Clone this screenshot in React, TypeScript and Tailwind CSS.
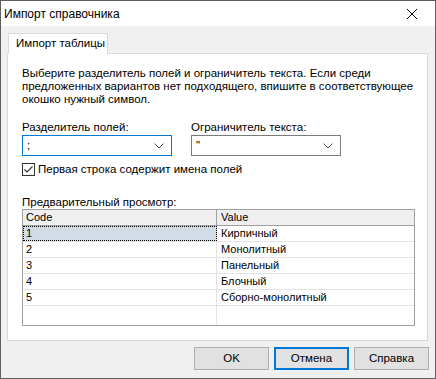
const rows = [
  { code: "1", value: "Кирпичный" },
  { code: "2", value: "Монолитный" },
  { code: "3", value: "Панельный" },
  { code: "4", value: "Блочный" },
  { code: "5", value: "Сборно-монолитный" },
]

function Chevron() {
  return (
    <svg width="10" height="6" viewBox="0 0 10 6" className="shrink-0">
      <path d="M0.5 0.5 L5 5 L9.5 0.5" fill="none" stroke="#4d4d4d" strokeWidth="1" />
    </svg>
  )
}

function Combo({ value, focused }: { value: string; focused?: boolean }) {
  return (
    <div
      className={`w-[150px] h-[21px] bg-white flex items-center justify-between pl-[4px] pr-[7px] border ${
        focused ? "border-[#0078d7]" : "border-[#7a7a7a]"
      }`}
    >
      <span className="leading-none">{value}</span>
      <Chevron />
    </div>
  )
}

function Button({ label, focused }: { label: string; focused?: boolean }) {
  return (
    <div
      className={`w-[75px] h-[23px] bg-[#e1e1e1] flex items-center justify-center ${
        focused ? "border-2 border-[#0078d7]" : "border border-[#adadad]"
      }`}
    >
      {label}
    </div>
  )
}

export default function App() {
  return (
    <div className="w-[436px] h-[379px] border border-[#5e5e5e] bg-[#f0f0f0] flex flex-col text-[11.5px] text-black font-['Liberation_Sans',Arial,sans-serif]">
      <div className="h-[25px] bg-white flex items-center justify-between shrink-0">
        <span className="pl-[3px] pt-[1px] text-[12px]">Импорт справочника</span>
        <div className="w-[46px] h-full flex items-center justify-center">
          <svg width="10" height="10" viewBox="0 0 10 10">
            <path d="M0 0 L10 10 M10 0 L0 10" stroke="#000" strokeWidth="1" />
          </svg>
        </div>
      </div>

      <div className="px-[6px] pt-[7px] flex flex-col">
        <div className="ml-[1px] w-[100px] h-[21px] bg-white border border-b-0 border-[#d9d9d9] flex items-center pl-[7px] whitespace-nowrap relative z-10">
          Импорт таблицы
        </div>
        <div className="-mt-[1px] w-[421px] h-[288px] bg-white border border-[#d9d9d9] pl-[14px] pt-[13px] flex flex-col">
          <p className="leading-[13px] whitespace-nowrap">
            Выберите разделитель полей и ограничитель текста. Если среди
            <br />
            предложенных вариантов нет подходящего, впишите в соответствующее
            <br />
            окошко нужный символ.
          </p>

          <div className="mt-[14px] flex gap-[19px]">
            <div className="flex flex-col gap-[1px]">
              <span className="leading-[14px]">Разделитель полей:</span>
              <Combo value=";" focused />
            </div>
            <div className="flex flex-col gap-[1px]">
              <span className="leading-[14px]">Ограничитель текста:</span>
              <Combo value={'"'} />
            </div>
          </div>

          <div className="mt-[6px] flex items-center gap-[3px] h-[14px]">
            <div className="w-[13px] h-[13px] border border-[#333] bg-white flex items-center justify-center">
              <svg width="11" height="11" viewBox="0 0 11 11">
                <path d="M1.5 5.5 L4 8 L9.5 2.5" fill="none" stroke="#333" strokeWidth="1.2" />
              </svg>
            </div>
            <span className="leading-[14px]">Первая строка содержит имена полей</span>
          </div>

          <span className="mt-[19px] leading-[14px]">Предварительный просмотр:</span>

          <div className="w-[393px] h-[117px] border border-[#a0a0a0] flex flex-col text-[11px]">
            <div className="h-[16px] flex bg-[#efefef] border-b border-[#a0a0a0] shrink-0">
              <div className="w-[194px] border-r border-[#a0a0a0] pl-[3px] leading-[15px]">Code</div>
              <div className="flex-1 pl-[4px] leading-[15px]">Value</div>
            </div>
            {rows.map((r, i) => (
              <div key={r.code} className="h-[16px] flex border-b border-[#e3e3e3] shrink-0">
                <div
                  className={`w-[194px] border-r border-[#e3e3e3] pl-[3px] leading-[14px] ${
                    i === 0 ? "bg-[#d2dce7] outline outline-1 outline-dotted outline-black -outline-offset-1" : ""
                  }`}
                >
                  {r.code}
                </div>
                <div className="flex-1 pl-[4px] leading-[15px]">{r.value}</div>
              </div>
            ))}
            <div className="flex-1 flex">
              <div className="w-[194px] border-r border-[#e3e3e3]" />
            </div>
          </div>
        </div>

        <div className="mt-[6px] flex justify-end gap-[5px]">
          <Button label="OK" />
          <Button label="Отмена" focused />
          <Button label="Справка" />
        </div>
      </div>
    </div>
  )
}
